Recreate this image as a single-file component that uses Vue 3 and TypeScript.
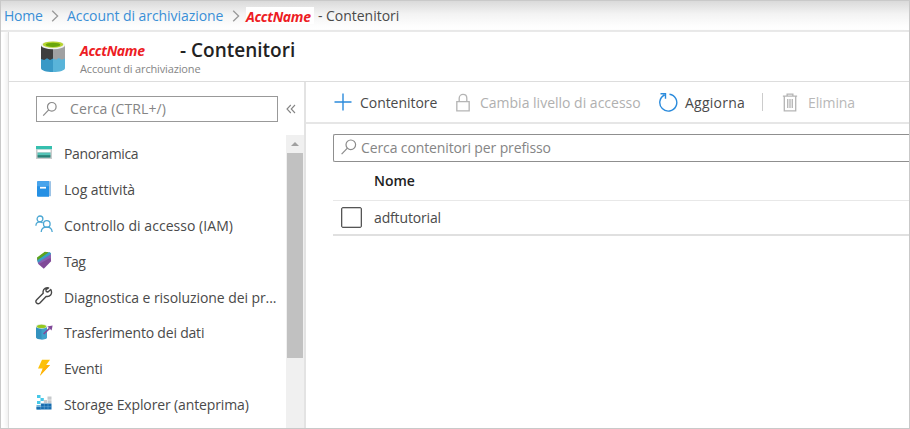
<script setup lang="ts">
type NavIcon = 'overview' | 'log' | 'people' | 'tag' | 'wrench' | 'transfer' | 'bolt' | 'explorer'

interface NavItem {
  label: string
  icon: NavIcon
  tracking: number
}

const navItems: NavItem[] = [
  { label: 'Panoramica', icon: 'overview', tracking: -0.34 },
  { label: 'Log attività', icon: 'log', tracking: -0.04 },
  { label: 'Controllo di accesso (IAM)', icon: 'people', tracking: 0.04 },
  { label: 'Tag', icon: 'tag', tracking: -0.6 },
  { label: 'Diagnostica e risoluzione dei pr...', icon: 'wrench', tracking: -0.07 },
  { label: 'Trasferimento dei dati', icon: 'transfer', tracking: -0.2 },
  { label: 'Eventi', icon: 'bolt', tracking: -0.2 },
  { label: 'Storage Explorer (anteprima)', icon: 'explorer', tracking: -0.13 },
]

const containers: string[] = ['adftutorial']
</script>

<template>
  <div class="portal">
    <nav class="crumbs">
      <a class="link home">Home</a>
      <svg class="chev" viewBox="0 0 8 12"><path d="M1.2.8 6.6 6 1.2 11.2" /></svg>
      <a class="link acct">Account di archiviazione</a>
      <svg class="chev" viewBox="0 0 8 12"><path d="M1.2.8 6.6 6 1.2 11.2" /></svg>
      <span class="mask"><span class="redact">AcctName</span></span>
      <span class="current">- Contenitori</span>
    </nav>

    <div class="blade">
      <header class="head">
        <svg class="storage" viewBox="0 0 24 31">
          <path d="M0 4h12v16H0z" fill="#3e3e3e" />
          <path d="M12 4h12v16H12z" fill="#a0a1a2" />
          <path d="M0 18l3.200.9 2.800-1.700 3 1.700 3-1.300V31C5 31 0 29.500 0 27z" fill="#3999c6" />
          <path d="M12 17.600l3 1.100 2.800-1.700 3 1.700 3.200-1.300V27C24 29.500 19 31 12 31z" fill="#59b4d9" />
          <ellipse cx="12" cy="4.200" rx="12" ry="4" fill="#f2f2f2" />
          <ellipse cx="12" cy="3.600" rx="10.300" ry="3.200" fill="#b8d432" />
          <ellipse cx="12" cy="3.800" rx="7.400" ry="2.100" fill="#6aa60a" />
        </svg>
        <div class="titles">
          <div class="title-line">
            <span class="redact">AcctName</span>
            <h1 class="title">- Contenitori</h1>
          </div>
          <div class="subtitle">Account di archiviazione</div>
        </div>
      </header>

      <div class="body">
        <aside class="side">
          <div class="side-top">
            <div class="search small">
              <svg class="glass" viewBox="0 0 16 16"><circle cx="9.800" cy="5.800" r="4.300" /><path d="M6.700 8.900 1.200 14.600" /></svg>
              <span>Cerca (CTRL+/)</span>
            </div>
            <svg class="collapse" viewBox="0 0 10 10"><path d="M4.800 1 1 5l3.800 4M9 1 5.200 5 9 9" /></svg>
          </div>
          <div class="side-body">
            <ul class="menu">
              <li v-for="item in navItems" :key="item.label" class="entry">
                <svg class="nav-icon" viewBox="0 0 18 18">
                  <g v-if="item.icon === 'overview'">
                    <path d="M1 2h16v3.500H1z" fill="#35bfae" />
                    <path d="M1 5.500h16v9.500H1z" fill="#c9cbcc" />
                    <path d="M2.500 5.800h13v2.400h-13z" fill="#fff" />
                    <path d="M2.500 8.600h13v2.500h-13z" fill="#55c4b7" />
                    <path d="M2.500 11.100h13v2.500h-13z" fill="#258277" />
                  </g>
                  <g v-else-if="item.icon === 'log'">
                    <path d="M3 1.200h13v15H3z" fill="#9cc3e6" />
                    <path d="M2 2.200q0-1 1-1h11v15.600H3q-1 0-1-1z" fill="#2590e4" />
                    <path d="M2 2.200q0-1 1-1h11v5H2z" fill="#48a4ec" />
                    <path d="M5 6.800h6v1.800H5z" fill="#fff" />
                  </g>
                  <g v-else-if="item.icon === 'people'" fill="none" stroke="#4ba7d3" stroke-width="1.300">
                    <circle cx="5" cy="3.900" r="2.900" />
                    <circle cx="11.800" cy="8.900" r="3.300" />
                    <path d="M.9 10.800C1 8.300 2.500 6.900 4.800 6.900q1.700 0 2.800 1M6.200 17c.2-3 2.300-4.800 5.500-4.800s5.200 1.800 5.500 4.800" />
                  </g>
                  <g v-else-if="item.icon === 'tag'">
                    <path d="M2 7.500 10 1l5.600 1 .5 8.200-7.300 7.500-5.500-4.800z" fill="#804998" />
                    <path d="M2 6.500 9.800.8l4.200.5L2.600 9.800z" fill="#5ca51c" />
                    <path d="M2.300 9.300 14.200 1.100l1.600 1v1.500L3 12.200z" fill="#36a1c5" />
                    <path d="M3 11.500 15.900 3.200v3.300l-12 6.400z" fill="#8661b4" />
                  </g>
                  <path
                    v-else-if="item.icon === 'wrench'"
                    d="M15.800 2.500 12.900 5l-1.700-.5-.3-1.800L13.600.9c-2.400-.6-5.200.7-5.500 3.500-.1 1 .1 1.500.1 1.900L1.700 12.800c-2.400 2.400.8 5.300 3.200 3.100l6.200-6.500c3.600.8 6.900-2.200 4.700-6.900z"
                    fill="none"
                    stroke="#484848"
                    stroke-width="1.400"
                    stroke-linejoin="round"
                  />
                  <g v-else-if="item.icon === 'transfer'">
                    <path d="M1 3.500h11v11C12 17 1 17 1 14.500z" fill="#3392be" />
                    <path d="M6.500 3.500H12v11c0 1.200-2.500 1.900-5.500 1.900z" fill="#41a1ca" />
                    <ellipse cx="6.500" cy="3.400" rx="5.500" ry="2.300" fill="#dce8d0" />
                    <ellipse cx="6.500" cy="3.400" rx="4.500" ry="1.700" fill="#94c81f" />
                    <path d="M8.600 11 14.500 5.300" stroke="#804998" stroke-width="1.700" fill="none" />
                    <path d="M12.300 3.500 17.600 2.400 16.600 7.600z" fill="#804998" />
                  </g>
                  <g v-else-if="item.icon === 'bolt'">
                    <path d="M7 .8h8L11.200 6H15L5 16.800 7.600 9.600H3z" fill="#fcc10a" />
                    <path d="M11.200 6H15L5 16.800l3.300-7.200z" fill="#ffb20c" />
                  </g>
                  <g v-else>
                    <path d="M2 1h3.500v3H2zM5.500 4h3.300v3H5.500zM2 7h3.500v3H2z" fill="#45c8e8" />
                    <path d="M12.500 2.500h4v3.300h-4zM8.800 6h3.200v3H8.800zM12.500 6.300h4v3h-4z" fill="#c6c9cc" />
                    <path d="M1.500 11h4.300v4.500H1.500z" fill="#6db3d8" />
                    <path d="M6 9.500h10.500v6H1.500V13H6z" fill="#176cae" />
                    <path d="M1.500 12.700h15M5.700 9.500v6M9.300 9.500v6M13 9.500v6" stroke="#8bc0e2" stroke-width=".4" />
                  </g>
                </svg>
                <span :style="{ letterSpacing: item.tracking + 'px' }">{{ item.label }}</span>
              </li>
            </ul>
            <div class="scroll">
              <svg class="arrow" viewBox="0 0 8 4"><path d="M0 4 4 0l4 4z" fill="#a0a0a0" /></svg>
              <div class="thumb"></div>
            </div>
          </div>
        </aside>

        <main class="main">
          <div class="tools">
            <svg class="i-plus" viewBox="0 0 18 18"><path d="M9 .5v17M.5 9h17" /></svg>
            <span class="l-new">Contenitore</span>
            <svg class="i-lock" viewBox="0 0 16 20"><path d="M1.500 9h13v9.800h-13zM4 9V5.500C4 .2 12 .2 12 5.500V9" /></svg>
            <span class="l-level">Cambia livello di accesso</span>
            <svg class="i-refresh" viewBox="0 0 20 20"><path d="M11.500 2.200A8.500 8.500 0 1 1 6.500 3M2.500 1.700h5v5" /></svg>
            <span class="l-refresh">Aggiorna</span>
            <span class="rule"></span>
            <svg class="i-trash" viewBox="0 0 16 20"><path d="M.5 3.300h15M5 3V1.200h6V3M2 3.500v15.300h12V3.500M5.600 6.300v9.500M8 6.300v9.500M10.400 6.300v9.500" /></svg>
            <span class="l-delete">Elimina</span>
          </div>
          <div class="content">
            <div class="search wide">
              <svg class="glass" viewBox="0 0 16 16"><circle cx="9.800" cy="5.800" r="4.800" /><path d="M6.400 9.200.6 15.200" /></svg>
              <span>Cerca contenitori per prefisso</span>
            </div>
            <div class="thead">Nome</div>
            <div v-for="name in containers" :key="name" class="trow">
              <span class="check"></span>
              <span class="name">{{ name }}</span>
            </div>
          </div>
        </main>
      </div>
    </div>
  </div>
</template>

<style>
body {
  background: #fff;
}
</style>

<style scoped>
.portal {
  box-sizing: border-box;
  width: 910px;
  height: 429px;
  overflow: hidden;
  display: flex;
  flex-direction: column;
  border: 1px solid #c9c9c9;
  background: #fff;
  font-family: 'Open Sans', 'Noto Sans', sans-serif;
  font-size: 14px;
  color: #4a4a4a;
  white-space: nowrap;
}
.crumbs {
  box-sizing: border-box;
  flex: none;
  height: 31px;
  display: flex;
  align-items: center;
  padding-left: 3px;
  border-bottom: 2px solid #e6e6e6;
  background: linear-gradient(#dadada, #f3f3f3 45%, #fdfdfd 85%, #fff);
}
.link {
  color: #3a8fd6;
}
.home {
  width: 38px;
  letter-spacing: -0.25px;
}
.chev {
  flex: none;
  width: 8px;
  height: 12px;
  margin: 0 8px 0 9px;
  fill: none;
  stroke: #999;
  stroke-width: 1.3;
}
.acct {
  width: 156px;
  letter-spacing: -0.06px;
}
.acct + .chev {
  margin-right: 6px;
}
.mask {
  display: flex;
  align-items: center;
  height: 17px;
  width: 68px;
  background: #fff;
}
.redact {
  color: #ed1c24;
  font-weight: 700;
  font-style: italic;
  letter-spacing: -0.35px;
}
.mask .redact {
  padding-top: 2px;
}
.current {
  margin-left: 4px;
  letter-spacing: -0.03px;
}
.blade {
  flex: 1;
  min-height: 0;
  margin-left: 7px;
  border-left: 1px solid #ddd;
  box-shadow: -2px 0 4px #eee;
  display: flex;
  flex-direction: column;
}
.head {
  box-sizing: border-box;
  flex: none;
  height: 50px;
  display: flex;
  padding: 7px 0 0 32px;
  border-bottom: 1px solid #ddd;
}
.storage {
  width: 24px;
  height: 31px;
  margin-top: 2px;
}
.titles {
  margin-left: 15px;
}
.title-line {
  display: flex;
  align-items: center;
  height: 22px;
}
.title-line .redact {
  width: 100px;
}
.title {
  margin: 0;
  font-size: 19px;
  font-weight: 600;
  color: #222;
}
.subtitle {
  font-size: 11px;
  line-height: 16px;
  letter-spacing: -0.15px;
  color: #858585;
}
.body {
  flex: 1;
  min-height: 0;
  display: flex;
}
.side {
  box-sizing: border-box;
  width: 297px;
  display: flex;
  flex-direction: column;
  border-right: 2px solid #e3e3e3;
}
.side-top {
  display: flex;
  align-items: center;
  height: 53px;
  padding-left: 27px;
}
.search {
  box-sizing: border-box;
  display: flex;
  align-items: center;
  color: #858585;
}
.small {
  width: 242px;
  height: 26px;
  border: 1px solid #999;
  padding-left: 5px;
}
.glass {
  width: 16px;
  height: 16px;
  fill: none;
  stroke: #8a8a8a;
  stroke-width: 1.2;
}
.small span {
  margin-left: 12px;
  letter-spacing: 0.12px;
}
.collapse {
  width: 10px;
  height: 10px;
  margin-left: 8px;
  fill: none;
  stroke: #858585;
  stroke-width: 1.1;
}
.side-body {
  flex: 1;
  min-height: 0;
  display: flex;
  justify-content: space-between;
}
.menu {
  list-style: none;
  margin: 0;
  padding: 1px 0 0 26px;
}
.entry {
  height: 35.8px;
  display: flex;
  align-items: center;
}
.nav-icon {
  width: 18px;
  height: 18px;
  margin: 0 11px 2px 0;
}
.scroll {
  width: 18px;
  display: flex;
  flex-direction: column;
  align-items: center;
  background: #f0f0f0;
}
.arrow {
  width: 8px;
  height: 4px;
  margin: 7px 0;
}
.thumb {
  width: 16px;
  height: 205px;
  background: #c1c1c1;
}
.main {
  flex: 1;
  min-width: 0;
}
.tools {
  box-sizing: border-box;
  height: 42px;
  display: flex;
  align-items: center;
  padding-left: 28px;
  border-bottom: 2px solid #e6e6e6;
}
.tools svg {
  flex: none;
  fill: none;
  stroke: #b5b5b5;
  stroke-width: 1.4;
}
.tools .i-plus {
  width: 18px;
  height: 18px;
  stroke: #2b8bdc;
}
.tools .i-refresh {
  width: 20px;
  height: 20px;
  stroke: #2b8bdc;
}
.i-lock,
.i-trash {
  width: 16px;
  height: 19px;
}
.l-new {
  width: 78px;
  margin: 0 17px 0 8px;
  letter-spacing: -0.05px;
}
.l-level {
  width: 162px;
  margin: 0 16px 0 9px;
  color: #b0b0b0;
}
.l-refresh {
  width: 62px;
  margin: 0 15px 0 7px;
  letter-spacing: 0.25px;
}
.l-delete {
  margin-left: 10px;
  letter-spacing: -0.1px;
  color: #b8b8b8;
}
.rule {
  width: 1px;
  height: 18px;
  margin-right: 19px;
  background: #ccc;
}
.content {
  padding: 10px 0 0 27px;
}
.wide {
  height: 28px;
  border: 1px solid #8f8f8f;
  border-right: 0;
  border-radius: 2px 0 0 2px;
  padding: 0 0 2px 7px;
}
.wide span {
  margin-left: 4px;
  letter-spacing: -0.12px;
}
.thead {
  box-sizing: border-box;
  height: 39px;
  padding: 9px 0 0 41px;
  border-bottom: 1px solid #e8e8e8;
  font-weight: 600;
  color: #222;
}
.trow {
  box-sizing: border-box;
  height: 35px;
  display: flex;
  align-items: center;
  padding-left: 8px;
  border-bottom: 2px solid #e0e0e0;
}
.check {
  box-sizing: border-box;
  width: 21px;
  height: 21px;
  margin-right: 12px;
  border: 1.5px solid #555;
  border-radius: 2px;
  box-shadow: inset 0 0 0 0.5px #999;
}
.name {
  letter-spacing: -0.15px;
}
</style>
